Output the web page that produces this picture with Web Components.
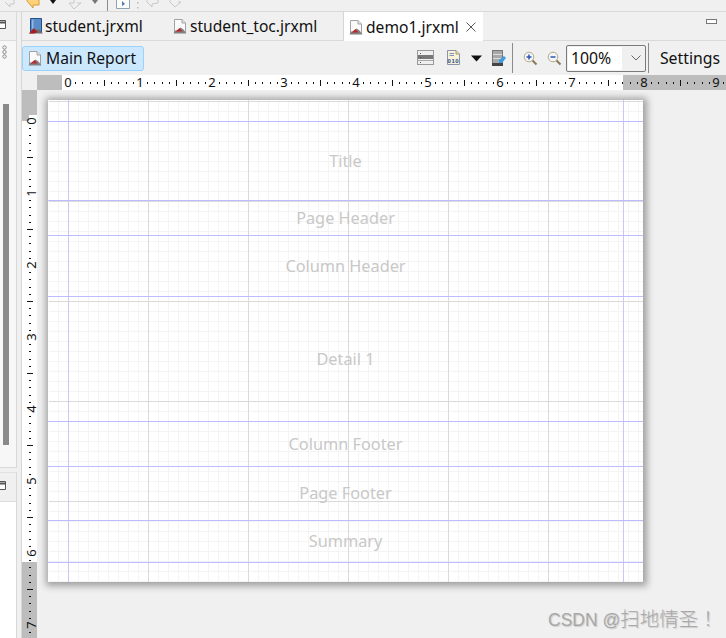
<!DOCTYPE html>
<html lang="en"><head><meta charset="utf-8"><title>demo1.jrxml</title>
<style>
html,body{margin:0;padding:0;height:100%;overflow:hidden;background:#f0f0f0}
body{font-family:"Noto Sans","Noto Sans CJK SC",sans-serif;color:#000}
</style></head><body>
<rs-app>
  <rs-strip slot="strip"></rs-strip>
  <rs-side slot="side"></rs-side>
  <rs-tabs slot="tabs">
    <rs-tab icon="book" w="144">student.jrxml</rs-tab>
    <rs-tab icon="doc" w="177" pad="6">student_toc.jrxml</rs-tab>
    <rs-tab icon="doc" w="140" pad="4" active>demo1.jrxml</rs-tab>
  </rs-tabs>
  <rs-toolbar slot="toolbar"></rs-toolbar>
  <rs-ruler slot="hruler" dir="h"></rs-ruler>
  <rs-ruler slot="vruler" dir="v"></rs-ruler>
  <rs-canvas slot="canvas">
    <rs-page>
      <rs-band h="22"></rs-band>
      <rs-band h="79">Title</rs-band>
      <rs-band h="35">Page Header</rs-band>
      <rs-band h="61">Column Header</rs-band>
      <rs-band h="125">Detail 1</rs-band>
      <rs-band h="45">Column Footer</rs-band>
      <rs-band h="54" up>Page Footer</rs-band>
      <rs-band h="42" up>Summary</rs-band>
      <rs-band h="19" last></rs-band>
    </rs-page>
    <rs-mark></rs-mark>
  </rs-canvas>
</rs-app>
<script>
const DOC=`<svg width="16" height="16" viewBox="0 0 16 16"><path d="M2.500 1.500H10L13.500 5V14.500H2.500Z" fill="#fafafa" stroke="#a2a2a2"/><path d="M10 1.500V5H13.500" fill="#e4e4e4" stroke="#a2a2a2"/><path d="M1.500 15.500L3 12.500H6L8.500 9.500 11.500 11.500 14.500 15.500Z" fill="#808080"/><path d="M3.500 13.500L7.500 10 10.500 13.500Z" fill="#b8282e"/></svg>`;
const BOOK=`<svg width="15" height="18" viewBox="0 0 15 18"><path d="M2.500 1.500H13.500V15H2.500Z" fill="#5a8cc8" stroke="#24508c"/><path d="M4 2.500H5.500V12H4Z" fill="#8fb6e4"/><path d="M1 16.500L6 11 9 13 11 12 15 16.500Z" fill="#6e6e6e"/><path d="M1 16.500L5.500 11.500 9.500 15 6 16.500Z" fill="#a81c22"/></svg>`;
function def(name,css,html,init){
  customElements.define(name,class extends HTMLElement{
    constructor(){super();const s=this.attachShadow({mode:"open"});
      s.innerHTML=`<style>${css}</style>${typeof html==="function"?html(this):html}`;}
    connectedCallback(){if(init)init(this)}
  });
}
def("rs-app",`:host{display:grid;width:726px;height:638px;overflow:hidden;grid-template-columns:21px 1fr;grid-template-rows:12px 1fr;background:#f0f0f0}
.strip{grid-column:1/3}
.side{grid-row:2}
.ed{display:grid;grid-template-columns:16px 1fr;grid-template-rows:29px 34px 15px 1fr;border-left:1px solid #d6d6d6;min-width:0;min-height:0;width:704px}
.tabs,.tool{grid-column:1/3}
.h{grid-column:1/3}
.v{grid-row:4;grid-column:1}
.c{grid-row:4;grid-column:2;min-height:0}`,
`<div class="strip"><slot name="strip"></slot></div>
<div class="side"><slot name="side"></slot></div>
<div class="ed"><div class="tabs"><slot name="tabs"></slot></div><div class="tool"><slot name="toolbar"></slot></div><div class="h"><slot name="hruler"></slot></div><div class="v"><slot name="vruler"></slot></div><div class="c"><slot name="canvas"></slot></div></div>`);

def("rs-strip",`:host{display:block;height:12px;box-sizing:border-box;border-bottom:1px solid #d9d9d9;background:#f0f0f0;overflow:hidden}
svg{display:block}`,
`<svg width="726" height="11" viewBox="0 0 726 11">
<g fill="none" stroke="#c8c8c8"><path d="M5 2L10 7V4H14V-4"/><path d="M74 -4V3H69L74 9 81 3H77"/><path d="M147 -3V2L152 7V4L158 3V-3"/><path d="M170 -3V2L175 7 181 2H178"/></g>
<path d="M27 -2V1L33 8V5H39V-2Z" fill="#ffd27a" stroke="#d99a2b"/>
<path d="M50 0H56L53 4Z" fill="#111"/><path d="M92 0H98L95 4Z" fill="#777"/>
<path d="M107.500 0V11" stroke="#8c8c8c"/>
<path d="M116.500 -2V8.500H129.500V-2" fill="#fbfbfb" stroke="#8fa2b2"/><path d="M122 1L125 4 122 6Z" fill="#4d7aa8"/>
<path d="M137 2h1.500v1.500H137zM137 7h1.500v1.500H137z" fill="#bbb"/>
</svg>`);

def("rs-side",`:host{display:flex;flex-direction:column;width:21px;height:626px;box-sizing:border-box;padding-right:4px}
.p{border-right:1px solid #d9d9d9;box-sizing:border-box}
.a{height:456px;background:#f7f7f7;border-bottom:1px solid #d9d9d9}
.b{margin-top:4px;flex:1;background:#fff;border-top:1px solid #e0e0e0}
.hd{height:29px;background:#f0f0f0;border-bottom:1px solid #dcdcdc;box-sizing:border-box;overflow:hidden}
.hd svg{display:block;margin-top:8px}
.dots{display:block;margin:4px 0 0 2px}
.bar{width:6px;height:341px;margin:45px 0 0 3px;background:#8a8a8a}`,
`<div class="p a"><div class="hd"><svg width="16" height="10"><path d="M-2 .5H5.500V8.500H-2" fill="#fff" stroke="#555"/><path d="M0 2.500H5" stroke="#555" stroke-width="2"/></svg></div>
<svg class="dots" width="6" height="14"><g fill="none" stroke="#8c8c8c"><circle cx="2.500" cy="2.500" r="1.700"/><circle cx="2.500" cy="7" r="1.700"/><circle cx="2.500" cy="11.500" r="1.700"/></g></svg>
<div class="bar"></div></div>
<div class="p b"><div class="hd"><svg width="16" height="10"><path d="M-2 .5H5.500V8.500H-2" fill="#fff" stroke="#555"/><path d="M0 2.500H5" stroke="#555" stroke-width="2"/></svg></div></div>`);

def("rs-tabs",`:host{display:flex;height:29px;box-sizing:border-box;border-bottom:1px solid #d9d9d9;position:relative}
.min{margin:7px 9px 0 auto;width:9px;height:3px;border:1px solid #777;background:#fff;align-self:flex-start}`,
`<slot></slot><div class="min"></div>`);

def("rs-tab",`:host{display:flex;align-items:center;box-sizing:border-box;height:29px;font-size:15.600px;white-space:nowrap;color:#111;padding-bottom:1px}
:host([active]){background:#fff;border-left:1px solid #d6d6d6;height:29px;padding-bottom:0;position:relative}
svg{flex:none}.ic{display:flex;margin-right:2px}
.x{margin-left:auto;margin-right:7px;display:block}`,
t=>`<span class="ic">${t.getAttribute("icon")==="book"?BOOK:DOC}</span><slot></slot>${t.hasAttribute("active")?'<svg class="x" width="10" height="10"><path d="M.5.5L9.500 9.500M9.500.5L.5 9.500" stroke="#555" fill="none"/></svg>':""}`,
t=>{t.style.width=t.getAttribute("w")+"px";t.style.paddingLeft=(t.getAttribute("pad")||"6")+"px"});

def("rs-toolbar",`:host{display:flex;align-items:center;height:34px;box-sizing:border-box;font-size:15.800px;background:#f0f0f0;color:#111}
.main{display:flex;align-items:center;gap:3px;box-sizing:border-box;width:122px;height:25px;margin-left:0;padding-left:4px;font-size:15.600px;background:#cce8ff;border:1px solid #99d1ff;border-radius:3px}
.right{display:flex;align-items:center;margin-left:auto;height:100%}
svg{display:block;flex:none}
.sep{width:1px;height:30px;background:#8c8c8c}
.combo{display:flex;box-sizing:border-box;width:80px;height:27px;border:1px solid #7a7a7a;border-radius:2px;margin-left:4px;align-items:center}
.val{width:54px;height:23px;margin-left:1px;background:#fff;display:flex;align-items:center;padding-left:3px;box-sizing:border-box}
.set{margin:0 6px 0 11px}`,
`<div class="main">${DOC}<span>Main Report</span></div>
<div class="right">
<svg width="18" height="16" viewBox="0 0 18 16"><rect x=".5" y=".5" width="16" height="14" fill="#efefef" stroke="#999"/><rect x="1" y="5" width="15" height="4" fill="#777"/><path d="M1 10.500H16" stroke="#aaa"/><path d="M3 3h1v1H3zM3 7h1v1H3zM3 12h1v1H3z" fill="#555"/></svg>
<svg style="margin-left:11px" width="16" height="18" viewBox="0 0 16 18"><path d="M1.500 1.500H10L13.500 5V15.500H1.500Z" fill="#f8f3d8" stroke="#8a93a8"/><path d="M10 1.500V5H13.500" fill="#e8dca0" stroke="#a09a70"/><path d="M3.500 4.500H8M3.500 6.500H8" stroke="#7c93c0"/><text x="1.500" y="14" font-family="Liberation Sans" font-size="6" font-weight="700" letter-spacing=".6" fill="#1d4a8c">010</text></svg>
<svg style="margin-left:9px" width="11" height="7"><path d="M0 .5H11L5.500 6.500Z" fill="#111"/></svg>
<svg style="margin-left:9px" width="16" height="18" viewBox="0 0 16 18"><rect x="1.500" y="1.500" width="10" height="14" fill="#a8a8a8" stroke="#777"/><path d="M2 5.500H11M2 9.500H11" stroke="#dedede"/><rect x="1" y="14" width="11" height="3" fill="#444"/><path d="M8 14L8 11 13 7 15 9 11 14Z" fill="#3c9ce0"/></svg>
<div class="sep" style="margin-left:5px"></div>
<svg style="margin-left:10px" width="15" height="15" viewBox="0 0 15 15"><circle cx="6" cy="6" r="4.800" fill="#f3f5fb" stroke="#b4aa84"/><path d="M3.500 6H8.500M6 3.500V8.500" stroke="#2a58b0" stroke-width="1.500"/><path d="M9.500 9.500L13.500 13.500" stroke="#8a7a5c" stroke-width="2"/></svg>
<svg style="margin-left:9px" width="15" height="15" viewBox="0 0 15 15"><circle cx="6" cy="6" r="4.800" fill="#f3f5fb" stroke="#b4aa84"/><path d="M3.500 6H8.500" stroke="#2a58b0" stroke-width="1.500"/><path d="M9.500 9.500L13.500 13.500" stroke="#8a7a5c" stroke-width="2"/></svg>
<div class="combo"><div class="val">100%</div><svg style="margin-left:9px" width="10" height="6"><path d="M.5.5L5 5 9.500.5" fill="none" stroke="#666"/></svg></div>
<div class="sep" style="margin-left:2px"></div>
<span class="set">Settings</span>
</div>`);

def("rs-ruler",`:host{display:block;background:#f0f0f0}
:host([dir=h]){height:15px;margin-left:15px;width:689px}
:host([dir=v]){width:15px;height:548px;margin-top:0}
svg{display:block;overflow:visible}
text{font:13px "Noto Sans",sans-serif;fill:#111;text-anchor:middle}`,
"",
t=>{
  const h=t.getAttribute("dir")==="h";
  const len=h?689:548, z=31, w=h?555:441;
  let o="";
  const major=(p,a,b)=>h?`<path d="M${p} ${a}V${b}" stroke="#111"/>`:`<path d="M${a} ${p}H${b}" stroke="#111"/>`;
  o+=`<rect width="${h?len:15}" height="${h?15:len}" fill="#bdbdbd"/>`;
  o+=h?`<rect x="${z}" width="${w}" height="15" fill="#fff"/>`:`<rect y="${z}" width="15" height="${w}" fill="#fff"/>`;
  for(let i=1,n=Math.ceil(len/7.2);i<n;i++){
    if(i%10===0)continue;
    const p=Math.round(z+i*7.2);
    if(i%10===5){o+=major(p+.5,5,11);continue;}
    o+=h?`<rect x="${p}" y="7" width="1" height="2" fill="#111"/>`:`<rect x="7" y="${p}" width="2" height="1" fill="#111"/>`;
  }
  for(let n=0;n<10;n++){
    const p=z+n*72;
    if(p>len+5)break;
    const bg=p<z+w?"#fff":"#bdbdbd";
    if(h)o+=`<rect x="${p-6}" y="0" width="12" height="15" fill="${bg}"/><text x="${p}" y="12">${n}</text>`;
    else o+=`<rect x="7" y="${p-6}" width="8" height="12" fill="${bg}"/><text transform="translate(14 ${p}) rotate(-90)">${n}</text>`;
  }
  t.shadowRoot.innerHTML+=`<svg width="${h?len:15}" height="${h?15:len}">${o}</svg>`;
});

def("rs-canvas",`:host{display:block;position:relative;height:548px;padding:10px 0 0 10px;box-sizing:border-box;background:#f0f0f0;overflow:hidden}`,`<slot></slot>`);

def("rs-page",`:host{display:flex;flex-direction:column;box-sizing:border-box;width:595px;height:482px;border-left:1px solid #fff;background-color:#fff;
background-clip:padding-box;
background-image:
 linear-gradient(#c8c8ff,#c8c8ff),linear-gradient(#c8c8ff,#c8c8ff),
 linear-gradient(to right,transparent 99px,#dadada 99px),
 linear-gradient(#dadada 1px,transparent 1px),
 linear-gradient(to right,transparent 9px,#f4f4f4 9px),
 linear-gradient(#f4f4f4 1px,transparent 1px);
background-size:1px 100%,1px 100%,100px 100%,100% 100px,10px 100%,100% 10px;
background-position:19px 0,574px 0,0 0,0 1px,0 0,0 1px;
background-repeat:no-repeat,no-repeat,repeat-x,repeat-y,repeat-x,repeat-y;
box-shadow:1px 1px 7px 3px rgba(0,0,0,.34)}`,`<slot></slot>`);

def("rs-band",`:host{display:flex;align-items:center;justify-content:center;box-sizing:border-box;border-bottom:1px solid #bcbcff;margin-left:-1px;font-size:16.300px;color:#c8c8c8}
:host([up]){padding-bottom:2px}
:host([last]){border-bottom:0}`,`<slot></slot>`,
t=>{t.style.height=t.getAttribute("h")+"px"});

def("rs-mark",`:host{position:absolute;left:510px;bottom:6px;white-space:nowrap;font:17.500px "Liberation Sans","Noto Sans CJK SC",sans-serif;color:#a8a8a8;text-shadow:1px 1px 1px rgba(90,90,90,.25)}
.c{font:300 19.500px "Noto Sans CJK SC",sans-serif}
.t{font:300 19.500px "Noto Sans CJK TC",sans-serif}`,
`<span>CSDN @</span><span class="c">扫地情圣</span><span class="t">！</span>`);
</script>
</body></html>
